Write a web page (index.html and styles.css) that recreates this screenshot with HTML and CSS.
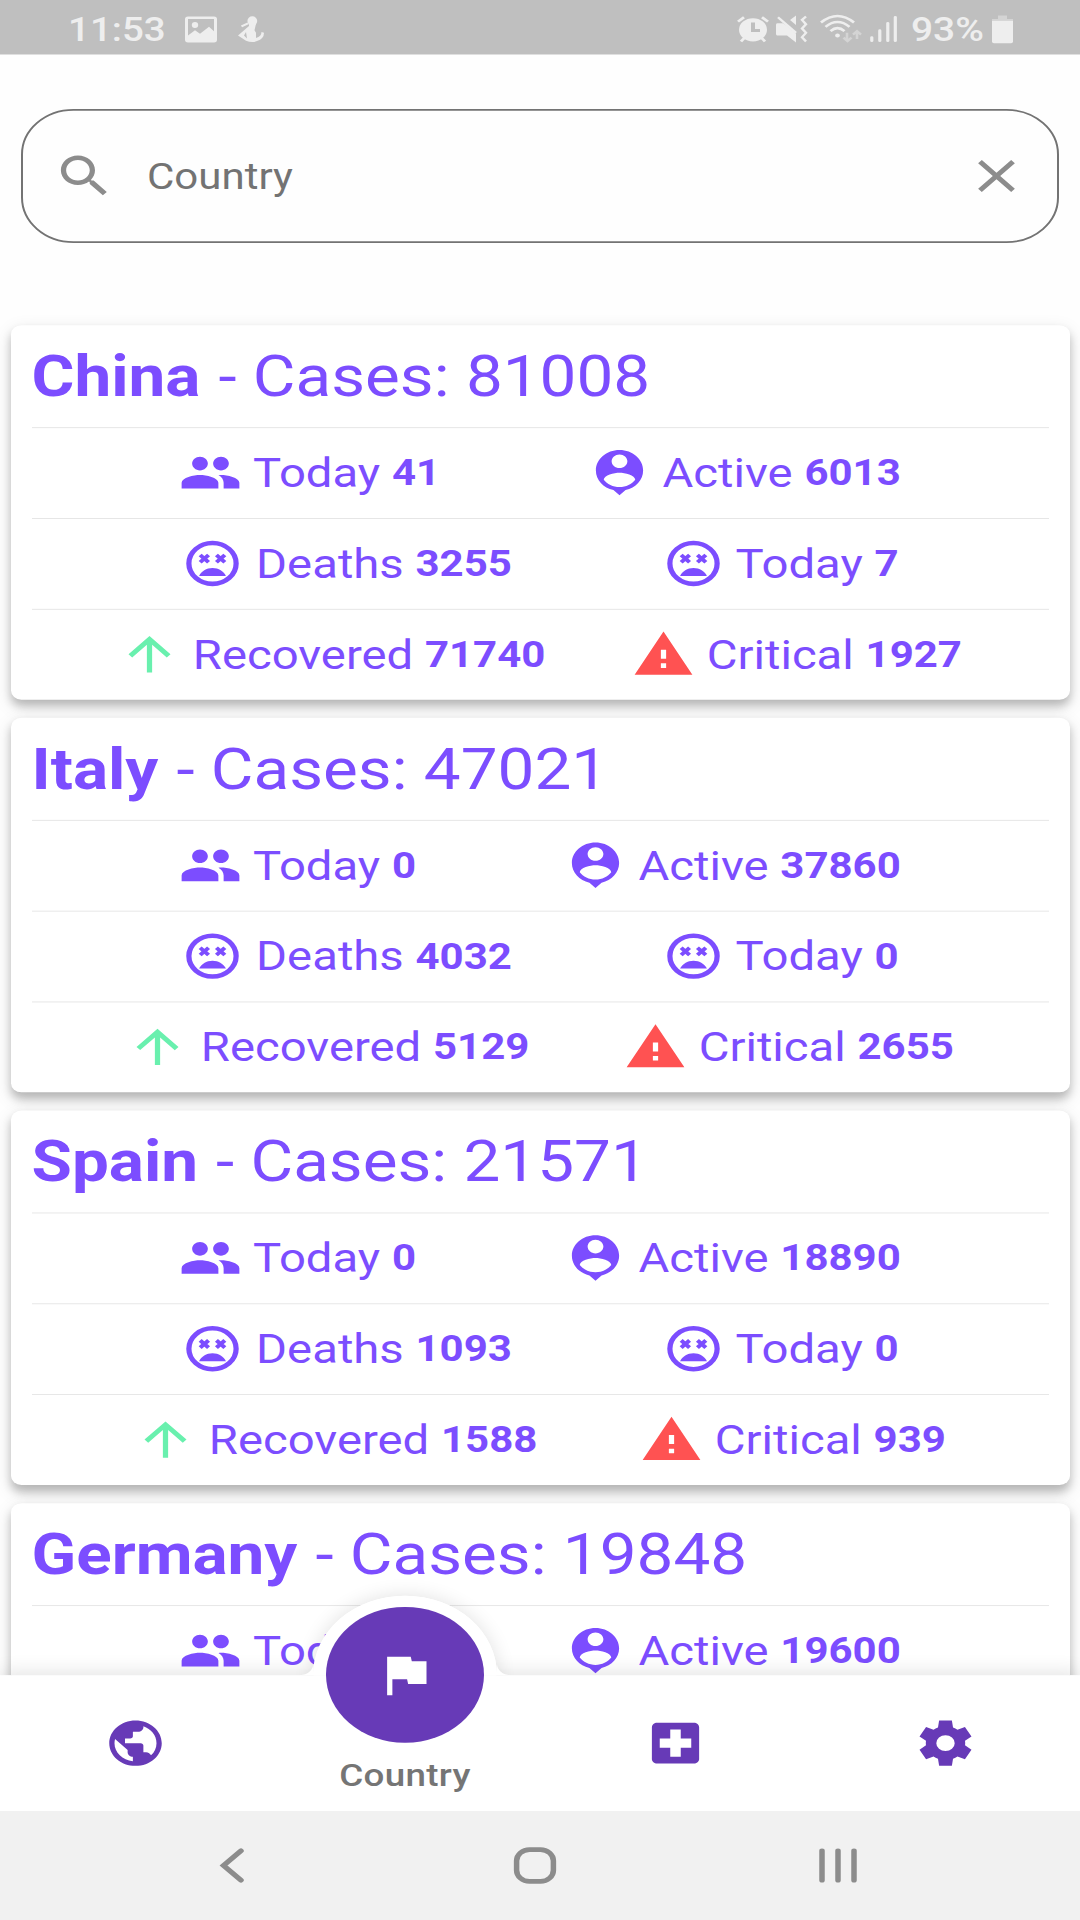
FILE: index.html
```html
<!DOCTYPE html>
<html lang="en">
<head>
<meta charset="utf-8">
<title>Country</title>
<link rel="stylesheet" href="styles.css">
</head>
<body>
<svg class="defs" aria-hidden="true">
  <symbol id="people" viewBox="0 0 24 24"><path d="M16 11c1.66 0 2.99-1.34 2.99-3S17.66 5 16 5s-3 1.34-3 3 1.34 3 3 3zm-8 0c1.66 0 2.99-1.34 2.99-3S9.66 5 8 5 5 6.34 5 8s1.34 3 3 3zm0 2c-2.33 0-7 1.17-7 3.5V19h14v-2.5c0-2.33-4.67-3.5-7-3.5zm8 0c-.29 0-.62.02-.97.05 1.16.84 1.97 1.97 1.97 3.45V19h6v-2.5c0-2.33-4.67-3.5-7-3.5z"/></symbol>
  <symbol id="person" viewBox="0 0 24 24"><path fill-rule="evenodd" d="M12 2c-4.97 0-9 4.03-9 9 0 4.17 2.84 7.67 6.69 8.69L12 22l2.31-2.31C18.16 18.67 21 15.17 21 11c0-4.97-4.03-9-9-9zm0 2c1.66 0 3 1.34 3 3s-1.34 3-3 3-3-1.34-3-3 1.34-3 3-3zm0 14.3c-2.5 0-4.71-1.28-6-3.22.03-1.99 4-3.08 6-3.08 1.99 0 5.97 1.09 6 3.08-1.29 1.94-3.5 3.22-6 3.22z"/></symbol>
  <symbol id="dead" viewBox="0 0 24 24"><circle cx="12" cy="12" r="9" fill="none" stroke="currentColor" stroke-width="2"/><path d="M12 14c-2.33 0-4.31 1.46-5.11 3.5h10.22C16.31 15.46 14.33 14 12 14z"/><path d="M7.3 8.3l3.2 3.2M10.500 8.300l-3.200 3.200M13.500 8.300l3.200 3.200M16.700 8.300l-3.200 3.200" fill="none" stroke="currentColor" stroke-width="1.600"/></symbol>
  <symbol id="up" viewBox="0 0 24 24"><path d="M4 12l1.41 1.41L11 7.83V20h2V7.83l5.58 5.59L20 12l-8-8-8 8z"/></symbol>
  <symbol id="warn" viewBox="0 0 24 24"><path d="M1 21h22L12 2 1 21zm12-3h-2v-2h2v2zm0-4h-2v-4h2v4z"/></symbol>
</svg>
<div class="screen">
  <header class="status">
    <span class="clock">11:53</span>
    <svg class="st-picture" viewBox="0 0 32 30"><path fill-rule="evenodd" d="M3 0h26a3 3 0 0 1 3 3v24a3 3 0 0 1-3 3H3a3 3 0 0 1-3-3V3a3 3 0 0 1 3-3zm0 3v19l7-6 5 4 9-8 5 5V3zm7 3.500a3.200 3.500 0 1 1 0 7 3.200 3.500 0 0 1 0-7z"/></svg>
    <svg class="st-figure" viewBox="0 0 26 30"><ellipse cx="14.300" cy="5.300" rx="4.900" ry="5.500"/><path fill-rule="evenodd" d="M11 11L0 22l8 6Q14 31 19 28.500 26 26 26 19L23.500 18Q23.500 23 18 25V19L16.500 16 18 8.500h-7zM8 18l-2 4 3 3.500z"/><path d="M3.500 11.500L10 8" stroke="currentColor" stroke-width="2.400"/></svg>
    <span class="spacer"></span>
    <svg class="st-alarm" viewBox="0 0 32 31"><path fill-rule="evenodd" d="M16 3a14 13.500 0 1 1 0 27 14 13.500 0 0 1 0-27zm-2 5v11h9v-3.500h-5V8z"/><path d="M1 7l6-5M31 7l-6-5M4 30l4-5M28 30l-4-5" stroke="currentColor" stroke-width="3"/></svg>
    <svg class="st-mute" viewBox="0 0 31 31"><path d="M0 11c0-2 1-2 2-2h5l4 3 9 9v10l-9-8H2c-1 0-2 0-2-2zM20 0v11l-6-6z"/><path d="M2 2l18 18" stroke="currentColor" stroke-width="2.500"/><path d="M30 1l-4 4 4 5-4 5 4 5-4 5 4 5" fill="none" stroke="currentColor" stroke-width="2.500"/></svg>
    <svg class="st-wifi" viewBox="0 0 42 33"><g fill="none" stroke="currentColor" stroke-width="2.800"><path d="M1 9Q17.500-6 34 9M5.500 14Q17.500 3 29.500 14M10.500 19Q17.500 12 24.500 19"/></g><circle cx="17.500" cy="24" r="2.400"/><path class="dim" d="M27 21v9M23.500 26.500l4 4 4-4M37 28v-9M33 23l4-4 4 4" fill="none" stroke="currentColor" stroke-width="2.600"/></svg>
    <svg class="st-signal" viewBox="0 0 27 31"><path d="M1.800 25.500V29M9.800 17.500V29M17.800 9V29M25.300 2V29" fill="none" stroke="currentColor" stroke-width="3.200" stroke-linecap="round"/></svg>
    <span class="percent">93%</span>
    <svg class="st-battery" viewBox="0 0 21 32"><path class="dim" d="M6 0h9v4h6v2H0V4h6z"/><path d="M0 6h21v24q0 2-2 2H2q-2 0-2-2z"/></svg>
  </header>

  <main class="content">
    <div class="search">
      <svg class="icon" viewBox="0 0 24 24"><path d="M15.500 14h-.79l-.28-.27C15.410 12.590 16 11.110 16 9.500 16 5.910 13.090 3 9.500 3S3 5.910 3 9.500 5.910 16 9.500 16c1.610 0 3.090-.59 4.230-1.570l.27.280v.79l5 4.990L20.490 19l-4.990-5zm-6 0C7.010 14 5 11.990 5 9.500S7.010 5 9.500 5 14 7.010 14 9.500 11.990 14 9.500 14z"/></svg>
      <span class="hint">Country</span>
      <svg class="icon" viewBox="0 0 24 24"><path d="M19 6.410L17.590 5 12 10.590 6.410 5 5 6.410 10.590 12 5 17.590 6.410 19 12 13.410 17.590 19 19 17.590 13.410 12z"/></svg>
    </div>

    <div class="list">
      <section class="card">
        <h2 class="title"><b>China</b> - Cases: 81008</h2>
        <div class="row">
          <div class="stat"><svg class="icon"><use href="#people"/></svg><span class="label"> Today </span><b>41</b></div>
          <div class="stat"><svg class="icon"><use href="#person"/></svg><span class="label"> Active </span><b>6013</b></div>
        </div>
        <div class="row">
          <div class="stat"><svg class="icon"><use href="#dead"/></svg><span class="label"> Deaths </span><b>3255</b></div>
          <div class="stat"><svg class="icon"><use href="#dead"/></svg><span class="label"> Today </span><b>7</b></div>
        </div>
        <div class="row">
          <div class="stat"><svg class="icon green"><use href="#up"/></svg><span class="label"> Recovered </span><b>71740</b></div>
          <div class="stat"><svg class="icon red"><use href="#warn"/></svg><span class="label"> Critical </span><b>1927</b></div>
        </div>
      </section>
      <section class="card">
        <h2 class="title"><b>Italy</b> - Cases: 47021</h2>
        <div class="row">
          <div class="stat"><svg class="icon"><use href="#people"/></svg><span class="label"> Today </span><b>0</b></div>
          <div class="stat"><svg class="icon"><use href="#person"/></svg><span class="label"> Active </span><b>37860</b></div>
        </div>
        <div class="row">
          <div class="stat"><svg class="icon"><use href="#dead"/></svg><span class="label"> Deaths </span><b>4032</b></div>
          <div class="stat"><svg class="icon"><use href="#dead"/></svg><span class="label"> Today </span><b>0</b></div>
        </div>
        <div class="row">
          <div class="stat"><svg class="icon green"><use href="#up"/></svg><span class="label"> Recovered </span><b>5129</b></div>
          <div class="stat"><svg class="icon red"><use href="#warn"/></svg><span class="label"> Critical </span><b>2655</b></div>
        </div>
      </section>
      <section class="card">
        <h2 class="title"><b>Spain</b> - Cases: 21571</h2>
        <div class="row">
          <div class="stat"><svg class="icon"><use href="#people"/></svg><span class="label"> Today </span><b>0</b></div>
          <div class="stat"><svg class="icon"><use href="#person"/></svg><span class="label"> Active </span><b>18890</b></div>
        </div>
        <div class="row">
          <div class="stat"><svg class="icon"><use href="#dead"/></svg><span class="label"> Deaths </span><b>1093</b></div>
          <div class="stat"><svg class="icon"><use href="#dead"/></svg><span class="label"> Today </span><b>0</b></div>
        </div>
        <div class="row">
          <div class="stat"><svg class="icon green"><use href="#up"/></svg><span class="label"> Recovered </span><b>1588</b></div>
          <div class="stat"><svg class="icon red"><use href="#warn"/></svg><span class="label"> Critical </span><b>939</b></div>
        </div>
      </section>
      <section class="card">
        <h2 class="title"><b>Germany</b> - Cases: 19848</h2>
        <div class="row">
          <div class="stat"><svg class="icon"><use href="#people"/></svg><span class="label"> Today </span><b>0</b></div>
          <div class="stat"><svg class="icon"><use href="#person"/></svg><span class="label"> Active </span><b>19600</b></div>
        </div>
      </section>
    </div>
  </main>

  <nav class="tabs">
    <div class="tab"><svg class="icon" viewBox="0 0 24 24"><path d="M12 2C6.480 2 2 6.480 2 12s4.480 10 10 10 10-4.480 10-10S17.520 2 12 2zm-1 17.930c-3.950-.49-7-3.850-7-7.930 0-.62.080-1.210.210-1.790L9 15v1c0 1.100.9 2 2 2v1.930zm6.900-2.540c-.26-.81-1-1.390-1.900-1.390h-1v-3c0-.55-.45-1-1-1H8v-2h2c.55 0 1-.45 1-1V7h2c1.100 0 2-.9 2-2v-.41c2.930 1.190 5 4.060 5 7.410 0 2.080-.8 3.970-2.100 5.390z"/></svg></div>
    <div class="tab active">
      <span class="tab-label">Country</span>
      <div class="bump">
        <div class="halo"></div>
        <svg class="arc" viewBox="0 0 90 35"><path d="M0 35.500V35H5A5 5 0 0 0 10 30V35A35 35 0 0 1 80 35V30A5 5 0 0 0 85 35H90V35.500Z"/></svg>
      </div>
      <div class="disc"><svg class="icon" viewBox="0 0 24 24"><path d="M14.400 6L14 4H5v17h2v-7h5.600l.4 2h7V6z"/></svg></div>
    </div>
    <div class="tab"><svg class="icon" viewBox="0 0 24 24"><path d="M19 3H5c-1.100 0-1.990.9-1.990 2L3 19c0 1.100.9 2 2 2h14c1.100 0 2-.9 2-2V5c0-1.100-.9-2-2-2zm-1 11h-4v4h-4v-4H6v-4h4V6h4v4h4v4z"/></svg></div>
    <div class="tab"><svg class="icon" viewBox="0 0 24 24"><path d="M12 15.500A3.500 3.500 0 0 1 8.500 12 3.500 3.500 0 0 1 12 8.500 3.500 3.500 0 0 1 15.500 12 3.500 3.500 0 0 1 12 15.500M19.430 12.970C19.470 12.650 19.500 12.330 19.500 12 19.500 11.670 19.470 11.340 19.430 11L21.900 9.100 19.400 4.900 16.560 6.050C16.040 5.660 15.500 5.320 14.870 5.070L14.430 2H9.570L9.130 5.070C8.500 5.320 7.960 5.660 7.440 6.050L4.600 4.900 2.100 9.100 4.570 11C4.530 11.340 4.500 11.670 4.500 12 4.500 12.330 4.530 12.650 4.570 12.970L2.100 14.900 4.600 19.100 7.440 17.940C7.960 18.340 8.500 18.680 9.130 18.930L9.570 22H14.430L14.870 18.930C15.500 18.670 16.040 18.340 16.560 17.940L19.400 19.100 21.900 14.900Z"/></svg></div>
  </nav>

  <footer class="system">
    <svg class="sys-back" viewBox="0 0 24 40"><path d="M21 3L3.500 20 21 37"/></svg>
    <svg class="sys-home" viewBox="0 0 42 42"><rect x="2.600" y="2.600" width="36.800" height="36.800" rx="13"/></svg>
    <svg class="sys-recent" viewBox="0 0 39 40"><path d="M3 3V37M19 3V37M35 3V37"/></svg>
  </footer>
</div>
</body>
</html>
```
FILE: styles.css
```css
* { box-sizing: border-box; }

html, body { margin: 0; width: 1080px; height: 1920px; overflow: hidden; background: #fff; }

/* The layout is a 1080x2220 phone screen at 2.625px per dp, fitted to a 1920px height. */
.screen {
  width: 1080px;
  height: 2220px;
  margin-bottom: -300px;
  display: flex;
  flex-direction: column;
  transform: scaleY(0.864865);
  transform-origin: 0 0;
  font-family: Roboto, "Liberation Sans", sans-serif;
  background: #fefefe;
}

svg { display: block; flex: none; fill: currentColor; overflow: visible; }
.defs { position: absolute; width: 0; height: 0; }
.icon { width: 63px; height: 63px; }

.status {
  flex: none;
  height: 63px;
  padding: 4px 67px 0 68px;
  display: flex;
  align-items: center;
  background: #bfbfbf;
  color: #eee;
  font-size: 39px;
  font-weight: 500;
}
.clock { font-size: 38.500px; }
.spacer { flex: 1; }
.dim { opacity: .45; }
.st-picture { width: 32px; height: 30px; margin-left: 19px; }
.st-figure { width: 26px; height: 30px; margin-left: 21px; }
.st-alarm { width: 32px; height: 31px; }
.st-mute { width: 31px; height: 31px; margin-left: 7px; }
.st-wifi { width: 42px; height: 33px; margin-left: 13px; }
.st-signal { width: 27px; height: 31px; margin-left: 8px; }
.percent { margin-left: 14px; }
.st-battery { width: 21px; height: 32px; margin-left: 8px; }

.content { flex: 1; min-height: 0; overflow: hidden; padding-top: 63px; }

.search {
  height: 154.600px;
  margin: 0 21px;
  padding: 0 29.500px;
  display: flex;
  align-items: center;
  border: 2.625px solid #737373;
  border-radius: 52.500px;
  color: #8c8c8c;
}
.hint { flex: 1; margin-left: 31.500px; font-size: 42px; color: #737373; }

.list { padding: 95px 10.500px 0; display: flex; flex-direction: column; gap: 21px; }

.card {
  height: 433.100px;
  padding: 0 21px;
  background: #fff;
  border-radius: 10.500px;
  color: #7c4dff;
  box-shadow: 0 7px 9px rgba(0,0,0,.2), 0 7px 20px rgba(0,0,0,.13);
}
.title { margin: 0; height: 118.100px; line-height: 120px; font-size: 65.600px; font-weight: 400; white-space: pre; }
.title b { margin-right: 1.800px; }
.row { height: 105px; display: flex; justify-content: space-evenly; align-items: center; border-top: 1.500px solid #e3e3e3; }
.stat { display: flex; align-items: center; white-space: pre; font-size: 42px; }
.label { font-size: 47.250px; }
.green { color: #69f0ae; }
.red { color: #ff5252; }

.tabs {
  flex: none;
  height: 157.500px;
  position: relative;
  display: flex;
  background: #fff;
  color: #673ab7;
  box-shadow: 0 -2.600px 21px rgba(0,0,0,.12);
}
.tab { flex: 1; display: flex; align-items: center; justify-content: center; position: relative; }
.active { align-items: flex-end; padding-bottom: 20px; }
.tab-label { font-size: 36.750px; font-weight: 500; letter-spacing: .3px; color: #757575; }
.bump { position: absolute; left: 50%; bottom: 100%; width: 236.250px; height: 131px; margin-left: -118.100px; overflow: hidden; }
.halo { position: absolute; left: 26.250px; top: 39.100px; width: 183.750px; height: 183.750px; border-radius: 50%; background: #fff; box-shadow: 0 0 21px rgba(0,0,0,.12); }
.arc { position: absolute; left: 0; bottom: 0; width: 236.250px; height: 91.875px; color: #fff; }
.disc {
  position: absolute;
  left: 50%;
  top: -78.750px;
  width: 157.500px;
  height: 157.500px;
  margin-left: -78.750px;
  display: flex;
  align-items: center;
  justify-content: center;
  border-radius: 50%;
  background: #673ab7;
  color: #fff;
}

.system {
  flex: none;
  position: relative;
  height: 126px;
  padding: 0 222px 0 220px;
  display: flex;
  align-items: center;
  background: #f1f1f1;
}
.system svg { fill: none; stroke: #8c8c8c; stroke-width: 5.500; stroke-linecap: round; }
.sys-back { width: 24px; height: 40px; }
.sys-home { width: 42px; height: 42px; margin-left: 270px; }
.sys-recent { width: 39px; height: 40px; margin-left: auto; }
```
